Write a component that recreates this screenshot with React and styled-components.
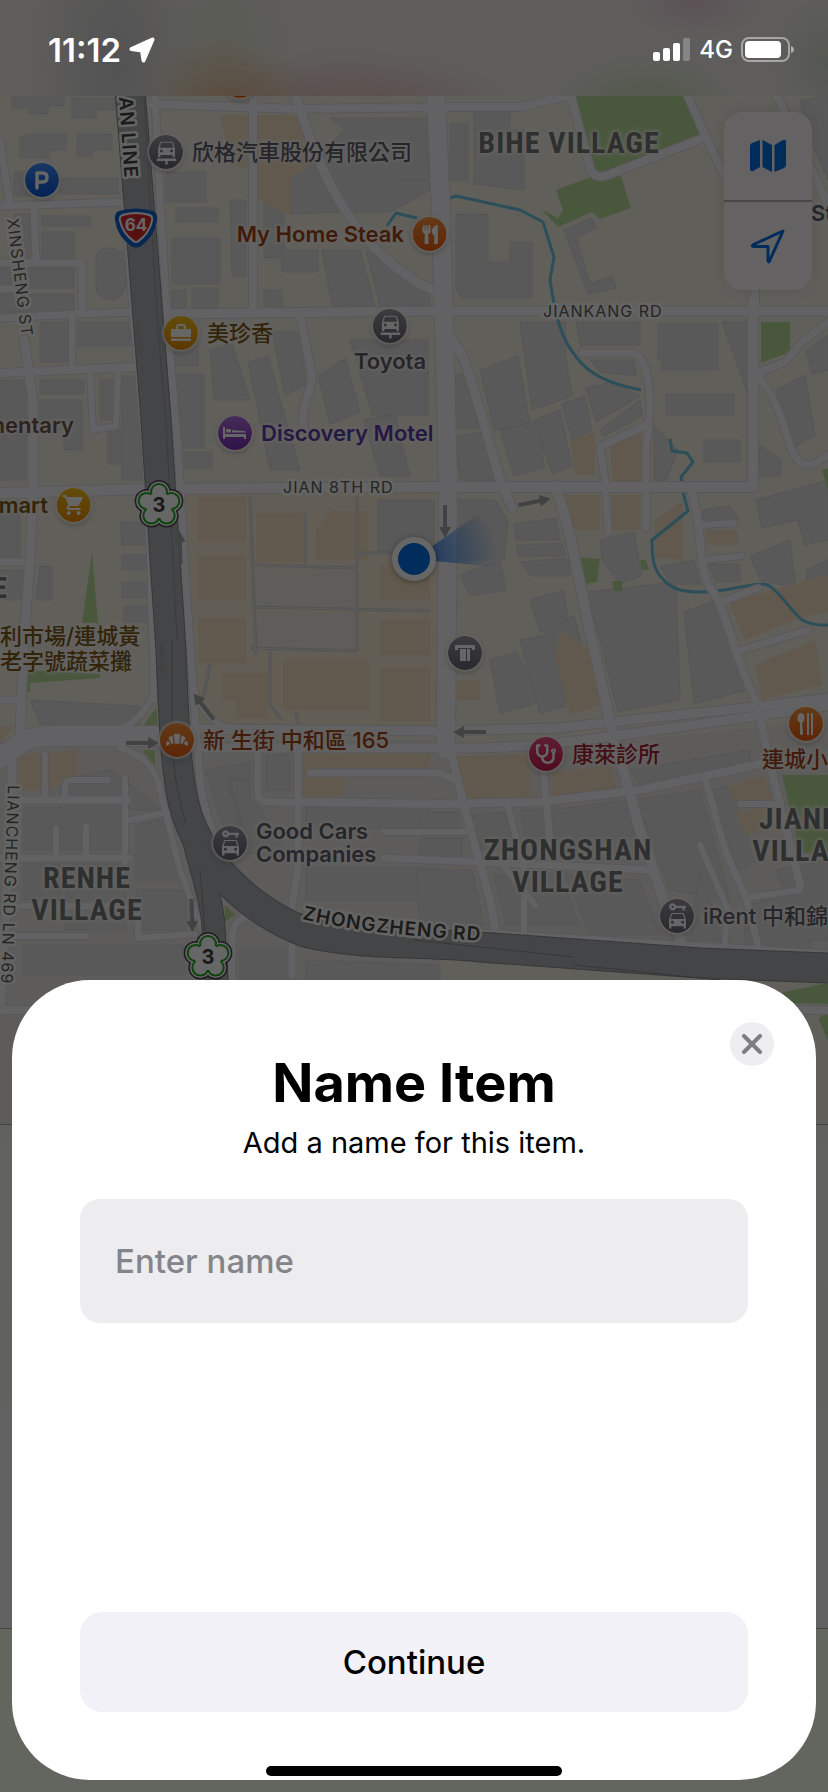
import React, { useState } from "react";
import styled, { createGlobalStyle, css } from "styled-components";
import { MdCarRepair, MdCarRental, MdBakeryDining, MdShoppingCart } from "react-icons/md";
import { FaUtensils, FaStethoscope } from "react-icons/fa";

const sans = `Inter, "Noto Sans CJK TC", sans-serif`;
const narrow = `"Liberation Sans Narrow", "Roboto Condensed", "DejaVu Sans Condensed", sans-serif`;

const MAP_W = 828;
const MAP_H = 1124;

const GlobalStyle = createGlobalStyle`
  *, *::before, *::after { box-sizing: border-box; }
  body { margin: 0; font-family: ${sans}; background: #666; }
  button, input { font-family: inherit; }
`;

const Screen = styled.div`
  position: relative;
  display: flex;
  flex-direction: column;
  justify-content: space-between;
  min-height: 100vh;
  overflow: hidden;
`;

/* ---------- Backdrop: map and the drawer under it ---------- */

const Backdrop = styled.div`
  position: absolute;
  inset: 0;
  display: flex;
  flex-direction: column;
`;

const MapCanvas = styled.div`
  position: relative;
  flex: none;
  width: 100%;
  aspect-ratio: ${MAP_W} / ${MAP_H};
  overflow: hidden;
`;

const Terrain = styled.svg`
  display: block;
  width: 100%;
  height: 100%;
`;

const DrawerBody = styled.div`
  flex: none;
  height: 504px;
  border-top: 1px solid #a8a8a4;
  background: linear-gradient(#f6f4e9, #f3f5f0 40%, #f4f4f6);
`;

const DrawerFooter = styled.div`
  flex: 1;
  border-top: 1px solid #a8a8a4;
  background: #f8ffec;
`;

const FrostedStrip = styled.div`
  position: absolute;
  inset: 0 0 auto 0;
  height: 96px;
  background:
    radial-gradient(ellipse 80px 70px at 27% 110%, rgba(226, 170, 110, 0.6), transparent),
    radial-gradient(ellipse 170px 60px at 42% 115%, rgba(220, 160, 145, 0.6), transparent),
    radial-gradient(ellipse 90px 110px at 27% 40%, rgba(222, 226, 200, 0.6), transparent),
    radial-gradient(ellipse 90px 180px at 14% 70%, rgba(196, 196, 198, 0.7), transparent),
    radial-gradient(ellipse 100px 60px at 78% 115%, rgba(190, 215, 160, 0.7), transparent),
    radial-gradient(ellipse 70px 40px at 84% 0%, rgba(215, 160, 190, 0.4), transparent),
    radial-gradient(ellipse 60px 70px at 100% 66%, rgba(196, 206, 184, 0.6), transparent),
    #ece9e6;
`;

const MapControls = styled.div`
  position: absolute;
  top: 112px;
  right: 16px;
  width: 88px;
  border-radius: 18px;
  overflow: hidden;
  background: #fcf6f7;
  box-shadow: 0 0 16px rgba(0, 0, 0, 0.12);
`;

const ControlButton = styled.button`
  display: flex;
  align-items: center;
  justify-content: center;
  width: 100%;
  height: 88px;
  padding: 0;
  border: 0;
  background: none;
  color: #006ee6;

  & + & {
    height: 90px;
    border-top: 2px solid #b4b0b2;
  }
`;

const Scrim = styled.div`
  position: absolute;
  inset: 0;
  background: rgba(0, 0, 0, 0.6);
`;

/* ---------- Map annotations ---------- */

const halo = css`
  text-shadow:
    0 0 3px #f8f6f0, 0 0 3px #f8f6f0, 0 0 4px #f8f6f0, 0 0 6px #f8f6f0;
`;

const pinShift = {
  right: "translate(-18px, -50%)",
  left: "translate(calc(-100% + 18px), -50%)",
  below: "translate(-50%, -18px)",
};

const Pin = styled.div`
  position: absolute;
  left: ${(p) => (p.$x / MAP_W) * 100}%;
  top: ${(p) => (p.$y / MAP_H) * 100}%;
  display: flex;
  flex-direction: ${(p) => ({ right: "row", left: "row-reverse", below: "column" })[p.$side]};
  align-items: center;
  gap: ${(p) => (p.$side === "below" ? 6 : 8)}px;
  transform: ${(p) => pinShift[p.$side]};
`;

const pinTones = {
  gray: "linear-gradient(#9494a0, #646472)",
  orange: "linear-gradient(#f8923a, #e85c10)",
  yellow: "linear-gradient(#f8c014, #e88a00)",
  blue: "linear-gradient(#3c8cf8, #0a54d0)",
  purple: "linear-gradient(#b070e0, #762cb0)",
  pink: "linear-gradient(#ec4c84, #c81c4c)",
};

const PinDisc = styled.span`
  display: flex;
  flex: none;
  align-items: center;
  justify-content: center;
  width: 36px;
  height: 36px;
  border: 1px solid rgba(251, 249, 244, 0.8);
  border-radius: 50%;
  background: ${(p) => pinTones[p.$tone]};
  background-clip: padding-box;
  box-shadow: 0 0 2px 1px rgba(251, 249, 244, 0.8), 0 2px 5px rgba(0, 0, 0, 0.25);
  color: #fff;
`;

const labelTones = {
  gray: "#5e5e6c",
  orange: "#a2441a",
  yellow: "#7c5a14",
  purple: "#5c3ca6",
  pink: "#a82238",
  brown: "#74544e",
};

const PinLabel = styled.span`
  color: ${(p) => labelTones[p.$tone]};
  font-size: 22px;
  font-weight: ${(p) => (p.$cjk ? 500 : 600)};
  line-height: 23px;
  white-space: pre;
  ${halo}
`;

const FreeLabel = styled.div`
  position: absolute;
  left: ${(p) => (p.$x / MAP_W) * 100}%;
  top: ${(p) => (p.$y / MAP_H) * 100}%;
  transform: translate(${(p) => ({ start: "0", end: "-100%", middle: "-50%" })[p.$anchor]}, -50%);
  color: ${(p) => labelTones[p.$tone]};
  font-size: 22px;
  font-weight: ${(p) => (p.$cjk ? 500 : 600)};
  line-height: 25px;
  white-space: pre;
  ${halo}
`;

const VillageLabel = styled(FreeLabel)`
  color: #747677;
  font-family: ${narrow};
  font-size: 30px;
  font-weight: 700;
  line-height: 32px;
  letter-spacing: 1px;
  text-align: center;
`;

const Shield = styled.svg`
  position: absolute;
  left: ${(p) => (p.$x / MAP_W) * 100}%;
  top: ${(p) => (p.$y / MAP_H) * 100}%;
  transform: translate(-50%, -50%);
  overflow: visible;
`;

const UserDot = styled.div`
  position: absolute;
  left: ${(414 / MAP_W) * 100}%;
  top: ${(559 / MAP_H) * 100}%;
  width: 44px;
  height: 44px;
  border: 6px solid #fff;
  border-radius: 50%;
  background: #0070e6;
  box-shadow: 0 1px 6px rgba(0, 0, 0, 0.35);
  transform: translate(-50%, -50%);
`;

const StreetName = styled.text`
  fill: ${(p) => (p.$strong ? "#444446" : "#5c5c60")};
  stroke: #fbfaf6;
  stroke-width: 5px;
  stroke-linejoin: round;
  paint-order: stroke;
  font-family: ${sans};
  font-size: ${(p) => (p.$strong ? 19 : 16)}px;
  font-weight: ${(p) => (p.$strong ? 600 : 400)};
  letter-spacing: 1px;
`;

/* ---------- Status bar ---------- */

const StatusBar = styled.header`
  position: relative;
  display: flex;
  align-items: center;
  justify-content: space-between;
  height: 96px;
  padding: 4px 33px 0 48px;
  color: #fff;
`;

const StatusGroup = styled.div`
  display: flex;
  align-items: center;
  gap: 8px;
`;

const Clock = styled.span`
  font-size: 33px;
  font-weight: 600;
  line-height: 36px;
`;

const Network = styled.span`
  font-size: 24px;
  font-weight: 500;
  line-height: 28px;
`;

/* ---------- Sheet ---------- */

const Sheet = styled.section`
  position: relative;
  display: flex;
  flex-direction: column;
  min-height: 800px;
  margin: 12px;
  padding: 70px 68px 4px;
  border-radius: 78px;
  background: #fff;
  color: #000;
`;

const CloseButton = styled.button`
  position: absolute;
  top: 42px;
  right: 42px;
  display: flex;
  align-items: center;
  justify-content: center;
  width: 44px;
  height: 44px;
  padding: 0;
  border: 0;
  border-radius: 50%;
  background: #eeeef0;
  color: #7e7e84;
`;

const Title = styled.h1`
  margin: 0;
  font-size: 54px;
  font-weight: 700;
  line-height: 66px;
  text-align: center;
`;

const Subtitle = styled.p`
  margin: 8px 0 37px;
  font-size: 29px;
  font-weight: 400;
  line-height: 38px;
  text-align: center;
`;

const NameField = styled.input`
  width: 100%;
  height: 124px;
  padding: 0 35px;
  border: 0;
  border-radius: 20px;
  outline: 0;
  background: #ededef;
  color: #000;
  font-size: 33px;
  font-weight: 500;

  &::placeholder {
    color: #858589;
    opacity: 1;
  }
`;

const ContinueButton = styled.button`
  height: 100px;
  margin-top: auto;
  border: 0;
  border-radius: 22px;
  background: #f2f1f7;
  color: #000;
  font-size: 33px;
  font-weight: 500;
`;

const HomeIndicator = styled.div`
  width: 296px;
  height: 10px;
  margin: 54px auto 0;
  border-radius: 5px;
  background: #000;
`;

/* ---------- Map data ---------- */

const greens = [
  "M576 96H685L703 137L597 174L583 130Z",
  "M556 190L588 178L621 176L631 208L600 219L592 212L558 227L541 209L558 218L563 210Z",
  "M761 322H790V352L761 363Z",
  "M579 557L600 559L597 582L585 584Z",
  "M612 581H622V591H614Z",
  "M640 560H646L649 570H642Z",
  "M92 552L98 623H82Z",
  "M26 670L100 674V678L30 683V692H26Z",
  "M156 708L158 726H143Z",
  "M155 766V750L142 750Z",
  "M225 905L235 915L225 922Z",
  "M782 775H828V856L800 852Z",
  "M770 995L828 983V1004L790 1003Z",
  "M818 1018L828 1012V1040Z",
  "M822 470L828 468V490Z",
];

const orangeBlocks = [
  "M220 115H298L312 140L305 170L290 178V215L258 200V170L230 165Z",
  "M198 497H246V541H198Z",
  "M198 556H246V600H198Z",
  "M198 618H246V663H198Z",
  "M256 513H302V562H256Z",
  "M332 511H368V560H316V530Z",
  "M380 565H430V600H380Z",
  "M380 620H430V655H380Z",
  "M380 668H430V721H380Z",
  "M222 673H268V718H236V700H222Z",
  "M283 661H370V710H283Z",
  "M562 495H600V530H575L562 510Z",
  "M612 495H640V530H612Z",
  "M655 520L683 500V560L655 558Z",
  "M610 445L642 430V482H612Z",
  "M570 440L595 432V475H575Z",
  "M706 530H738V545H706Z",
  "M728 602L828 575V612L800 618L745 640Z",
  "M560 630L590 650L600 705L570 716L556 660Z",
  "M456 680H480V700H456Z",
  "M456 756L530 754V798L466 800Z",
  "M552 772L610 765L618 790L552 796Z",
  "M300 750H430V778H300Z",
  "M755 665L815 640L822 685L762 700Z",
  "M728 785L766 775L772 800L735 805Z",
  "M735 812L768 806L774 830L745 834Z",
  "M16 755L78 750V775L50 790H18Z",
  "M0 725L14 728L0 742Z",
  "M300 775H345V796H300Z",
];

const buildings = [
  "M12 96H64V106H48V114H28V108H12Z",
  "M72 98H116V110H96V118H72Z",
  "M28 134H66V150H50V158H20V138Z",
  "M78 134H112V150H92V156H76Z",
  "M14 172H50V196H14Z",
  "M60 178H118V194H60Z",
  "M14 214H30V258H14Z",
  "M42 216H90V226H42Z",
  "M42 232H74V258H42Z",
  "M96 258Q96 248 110 248Q126 250 126 262V286Q122 300 110 300Q96 298 96 286Z",
  "M0 268H74V288H0Z",
  "M0 294H74V312H0Z",
  "M40 322H68V362H40Z",
  "M78 322H130V346H78Z",
  "M0 380H26V480H0Z",
  "M40 380H84V394H40Z",
  "M40 400H62V430H40Z",
  "M64 400H82V450H64Z",
  "M100 380H112V420H100Z",
  "M108 430H122V464H108Z",
  "M122 376H142V480H122Z",
  "M0 500H20V556H0Z",
  "M40 566H52V600H36Z",
  "M120 522H146V545H122Z",
  "M122 555H148V570H122Z",
  "M122 582H148V598H122Z",
  "M124 606H150V622H124Z",
  "M0 570H24V600H0Z",
  "M30 700L140 706V724H40Z",
  "M166 172H206V202H166Z",
  "M176 208H218V222H176Z",
  "M172 238H220V284H172Z",
  "M192 288H218V308H192Z",
  "M172 290H186V308H172Z",
  "M230 200H246V276H232Z",
  "M290 214V178L345 130L330 118H430V190L390 212H340Z",
  "M264 200L284 214V258H264Z",
  "M264 290H282V310H264Z",
  "M282 250H318V272H282Z",
  "M322 250L360 250L375 306H332Z",
  "M366 250L430 296V306H380Z",
  "M400 150H428V180H400Z",
  "M172 340H198V366H172Z",
  "M174 374H204V448H176Z",
  "M184 452H212V468H184Z",
  "M210 350L232 344L250 400H214Z",
  "M248 362L268 356L300 470H270Z",
  "M272 332H300L306 385L285 395Z",
  "M318 376L345 358L360 412L330 424Z",
  "M350 340H428V415H372Z",
  "M364 420L395 414L410 476H380Z",
  "M378 500H434V552H378Z",
  "M450 124H468V180H450Z",
  "M472 112H510V130H524V190L474 184V112Z",
  "M456 214H488V262H510V242H532V298H462L456 290Z",
  "M564 230L592 218L596 228L576 238L590 284L612 276L616 288L588 294Z",
  "M520 322H566V360L572 396L532 410Z",
  "M576 322H640V345H582V352Z",
  "M590 360H634L636 376L600 372Z",
  "M658 324H718V370H662V360H658Z",
  "M722 322H750V400Z",
  "M666 394H734V415H666Z",
  "M704 440H740V462H704Z",
  "M454 375L472 372L478 428H456Z",
  "M480 370L518 356L530 424L494 430Z",
  "M456 436L484 432L496 480H460Z",
  "M500 430L540 420L544 468L514 476Z",
  "M534 420L560 410L572 466L552 474Z",
  "M562 404L585 396L592 430L572 440Z",
  "M586 388L612 382L640 396L596 422Z",
  "M600 430L640 400L642 416L604 436Z",
  "M654 425L678 450L666 480H654Z",
  "M456 500H495L508 520L504 560H456Z",
  "M514 524L556 518L560 540H516Z",
  "M516 545L562 543L566 556H518Z",
  "M520 562L570 558V576H530Z",
  "M460 575L500 560L506 590L470 596Z",
  "M600 540L634 532L642 576L620 584L602 560Z",
  "M586 592L676 582L680 700L618 712L600 640Z",
  "M684 612L716 600L746 690L694 704Z",
  "M530 600L564 590L568 624L540 632Z",
  "M545 630L574 616L582 645L548 652Z",
  "M490 660L516 652L546 700L500 714Z",
  "M520 640L552 634L566 706L540 714Z",
  "M660 566L694 560L700 584L672 584Z",
  "M702 510L730 506L740 520H704Z",
  "M708 564H740V582H716Z",
  "M750 556L790 540L796 588L760 580Z",
  "M756 500L828 480V540L805 545L798 520L762 528Z",
  "M806 570L828 560V600H808Z",
  "M760 445L782 460L780 476H758Z",
  "M776 390L805 375L815 435L790 450Z",
  "M806 350L828 335V370L812 374Z",
  "M800 100L828 96V180L806 130Z",
  "M24 808H120V850H24Z",
  "M60 780L110 770L150 800L160 810H60Z",
  "M136 825L168 818L186 880L136 880Z",
  "M24 864H60V900H24Z",
  "M66 864H125V930H66Z",
  "M136 890H186V930H140Z",
  "M24 945H184V975H24Z",
  "M206 770L250 762V800L262 810L290 860L230 850Z",
  "M266 755H290V790H266Z",
  "M306 806H430V828H306Z",
  "M306 868H440V900H306Z",
  "M240 950H292V990H240Z",
  "M306 960L440 965V990H306Z",
  "M470 815L505 812L518 850H482Z",
  "M420 812H458V828H420Z",
  "M420 838H462V858H420Z",
  "M416 870H472L484 925H420Z",
  "M552 810L626 800L640 862L556 858Z",
  "M520 810H544V860H530Z",
  "M494 875H560L580 925H506Z",
  "M565 875L640 880L660 935H590Z",
  "M636 800L700 790L730 900L670 890Z",
  "M700 870L722 940H690Z",
  "M630 770L750 750V762L640 785Z",
  "M710 790L728 786L758 860L738 870Z",
  "M745 905L795 895L812 950H745Z",
  "M776 870L828 860V940H806Z",
];

const lanes = [
  { w: 8, d: "M150 104L300 109L437 107H520L572 95" },
  { w: 8, d: "M253 96V312" },
  { w: 9, d: "M294 92L310 138C330 190 350 225 385 258C405 275 420 286 440 292" },
  { w: 9, d: "M168 314L437 311H828" },
  { w: 10, d: "M0 493L150 489L437 487H753V300" },
  { w: 7, d: "M0 206L124 202" },
  { w: 7, d: "M0 140L10 206" },
  { w: 7, d: "M34 206L36 262" },
  { w: 7, d: "M0 263H82V310" },
  { w: 7, d: "M0 318L78 314L130 312" },
  { w: 7, d: "M0 289H20" },
  { w: 8, d: "M0 373L136 367" },
  { w: 6, d: "M72 316V368" },
  { w: 6, d: "M90 370L93 430L116 426L118 370" },
  { w: 9, d: "M24 340L33 400V490L30 560L24 640L20 735" },
  { w: 7, d: "M0 562H28" },
  { w: 7, d: "M0 700H22" },
  { w: 8, d: "M300 314L312 375C312 395 300 400 304 430" },
  { w: 9, d: "M442 330C465 345 470 380 480 410L500 480L512 508" },
  { w: 10, d: "M555 486C572 530 580 590 592 640L612 730L640 830L665 905L685 950" },
  { w: 7, d: "M582 353H632C645 355 650 380 650 410L646 450V528" },
  { w: 7, d: "M648 424L600 447L605 480L608 532" },
  { w: 8, d: "M690 487C705 530 696 570 712 590C728 615 732 650 757 705L775 785L800 885" },
  { w: 6, d: "M702 525L734 523" },
  { w: 6, d: "M702 560L742 556" },
  { w: 7, d: "M722 602L758 588" },
  { w: 7, d: "M742 650L808 630" },
  { w: 7, d: "M757 373L785 362L802 342L828 322" },
  { w: 7, d: "M757 375C785 405 785 450 800 462C810 470 820 460 828 455" },
  { w: 8, d: "M570 92L590 168Q594 180 608 175L706 137" },
  { w: 8, d: "M686 92L706 137L755 240V310" },
  { w: 8, d: "M775 92L800 145L828 205" },
  { w: 8, d: "M300 802L440 804L540 802L640 790L760 764" },
  { w: 8, d: "M449 745L465 810L490 900L498 945" },
  { w: 7, d: "M310 773H440L456 780" },
  { w: 7, d: "M543 768L550 840" },
  { w: 6, d: "M384 832H470" },
  { w: 7, d: "M384 858L480 862L650 870" },
  { w: 6, d: "M508 806L524 870L524 940" },
  { w: 6, d: "M505 868L535 905" },
  { w: 7, d: "M706 782L725 850L746 898L758 945" },
  { w: 6, d: "M745 898L800 890" },
  { w: 6, d: "M700 845L728 910L724 950" },
  { w: 6, d: "M740 804H780" },
  { w: 7, d: "M258 752V795Q260 802 272 802L305 803" },
  { w: 7, d: "M298 750V870L292 905V975" },
  { w: 7, d: "M14 800H128" },
  { w: 7, d: "M0 858H130" },
  { w: 6, d: "M125 778V862" },
  { w: 6, d: "M130 820L168 812" },
  { w: 6, d: "M45 755V800" },
  { w: 6, d: "M65 798V785Q65 780 76 780H108" },
  { w: 6, d: "M56 828V856" },
  { w: 6, d: "M86 826V856" },
  { w: 6, d: "M20 906H130" },
  { w: 6, d: "M0 936H86" },
  { w: 6, d: "M138 900V938L195 934" },
  { w: 7, d: "M232 990V935Q234 920 250 915" },
  { w: 9, d: "M12 760V800L0 1010" },
  { w: 8, d: "M0 1010H828" },
];

const arterials = [
  { w: 18, d: "M436 96L441 210L448 480L446 750" },
  { w: 20, d: "M0 758L24 741Q34 736 50 736H160" },
  { w: 9, d: "M190 729L440 731L560 728C640 718 720 712 828 698" },
  { w: 9, d: "M190 748H480C560 746 620 735 828 706" },
  { w: 7, d: "M155 96L160 200L168 330L178 450L187 600L194 700L200 780C210 860 250 895 300 920" },
  { w: 6, d: "M124 200L134 330L145 450L150 560L154 700" },
  { w: 6, d: "M158 680Q150 715 120 730" },
  { w: 6, d: "M194 690Q205 722 230 728" },
  { w: 6, d: "M120 748Q155 758 160 790L180 870L202 930" },
  { w: 7, d: "M300 925L500 934L828 954" },
];

const paths = [
  "M250 497L256 655",
  "M250 565L357 568M250 607L430 611M250 648L357 651M357 497V651",
  "M305 513V564M357 553H414",
  "M210 664L203 700M270 650V705L282 720M296 712L299 728",
  "M228 780L260 778M228 780L242 825",
];

const arrows = [
  { x: 445, y: 521, r: 90 },
  { x: 534, y: 502, r: -12 },
  { x: 142, y: 743, r: 0 },
  { x: 470, y: 732, r: 180 },
  { x: 204, y: 707, r: -128 },
  { x: 192, y: 915, r: 88 },
  { x: 180, y: 548, r: -92 },
  { x: 139, y: 338, r: 85 },
  { x: 162, y: 660, r: 87 },
];

const BagGlyph = () => (
  <svg width="24" height="20" viewBox="0 0 24 20" aria-hidden="true">
    <path d="M8 6V4Q8 2 10 2H14Q16 2 16 4V6" fill="none" stroke="currentColor" strokeWidth="2" />
    <path d="M2 6H22V14H2ZM2 15.500H22V18H2Z" fill="currentColor" />
  </svg>
);

const BedGlyph = () => (
  <svg width="26" height="16" viewBox="0 0 26 16" aria-hidden="true">
    <path d="M1 2H3V9H24V14H22V12H3V14H1Z" fill="currentColor" />
    <path d="M4 4H8Q9 4 9 5V7.500H4ZM10 5L22 6Q24 6 24 7.500H10Z" fill="currentColor" />
  </svg>
);

const AtmGlyph = () => (
  <svg width="22" height="20" viewBox="0 0 22 20" aria-hidden="true">
    <path d="M1 2H21V7H18V5H4V7H1Z" fill="currentColor" />
    <path d="M6 6H12V18H6ZM13 6H16V18H13Z" fill="currentColor" />
  </svg>
);

const ChopsticksGlyph = () => (
  <svg width="18" height="24" viewBox="0 0 18 24" aria-hidden="true">
    <ellipse cx="4" cy="6" rx="3.500" ry="5" fill="currentColor" />
    <path d="M3 9H5L6 22Q4 24 3 22ZM10 1H12V23H10ZM14 1H16V23H14Z" fill="currentColor" />
  </svg>
);

const ParkingGlyph = () => (
  <svg width="18" height="20" viewBox="0 0 18 20" aria-hidden="true">
    <path d="M4 18V3H9.500Q14 3 14 7.500T9.500 12H4" fill="none" stroke="currentColor" strokeWidth="3.500" strokeLinejoin="round" strokeLinecap="round" />
  </svg>
);

const pins = [
  { x: 240, y: 81, side: "right", tone: "orange" },
  { x: 166, y: 152, side: "right", tone: "gray", icon: <MdCarRepair size={29} />, text: "欣格汽車股份有限公司", cjk: true },
  { x: 42, y: 180, side: "right", tone: "blue", icon: <ParkingGlyph /> },
  { x: 430, y: 234, side: "left", tone: "orange", icon: <FaUtensils size={19} />, text: "My Home Steak" },
  { x: 181, y: 333, side: "right", tone: "yellow", icon: <BagGlyph />, text: "美珍香", cjk: true },
  { x: 390, y: 326, side: "below", tone: "gray", icon: <MdCarRepair size={29} />, text: "Toyota" },
  { x: 235, y: 433, side: "right", tone: "purple", icon: <BedGlyph />, text: "Discovery Motel" },
  { x: 74, y: 505, side: "left", tone: "yellow", icon: <MdShoppingCart size={24} />, text: "mart" },
  { x: 465, y: 653, side: "right", tone: "gray", icon: <AtmGlyph /> },
  { x: 177, y: 740, side: "right", tone: "orange", icon: <MdBakeryDining size={30} />, text: "新 生街 中和區 165", cjk: true },
  { x: 546, y: 754, side: "right", tone: "pink", icon: <FaStethoscope size={20} />, text: "康萊診所", cjk: true },
  { x: 806, y: 724, side: "below", tone: "orange", icon: <ChopsticksGlyph />, text: "連城小館", cjk: true },
  { x: 230, y: 843, side: "right", tone: "gray", icon: <MdCarRental size={29} />, text: "Good Cars\nCompanies" },
  { x: 677, y: 916, side: "right", tone: "gray", icon: <MdCarRental size={29} />, text: "iRent 中和錦", cjk: true },
];

const petals = [0, 1, 2, 3, 4].map((i) => {
  const a = ((-90 + i * 72) * Math.PI) / 180;
  return { cx: 13 * Math.cos(a), cy: 13 * Math.sin(a) };
});

const Blossom = ({ r, fill }) => (
  <g fill={fill}>
    <circle r="13" />
    {petals.map((p, i) => (
      <circle key={i} cx={p.cx} cy={p.cy} r={r} />
    ))}
  </g>
);

const FreewayShield = ({ x, y }) => (
  <Shield $x={x} $y={y} width="52" height="52" viewBox="-26 -26 52 52">
    <Blossom r={12} fill="#4a4a50" />
    <Blossom r={10.500} fill="#ffffff" />
    <Blossom r={9} fill="#22a822" />
    <Blossom r={7} fill="#ffffff" />
    <text y="7" textAnchor="middle" fontFamily={sans} fontSize="20" fontWeight="700" fill="#3c3c3c">3</text>
  </Shield>
);

const ExpresswayShield = ({ x, y }) => (
  <Shield $x={x} $y={y} width="44" height="40" viewBox="0 0 44 40">
    <path d="M5 3Q22 -2 39 3Q44 5 43 12Q41 28 27 38Q22 41 17 38Q3 28 1 12Q0 5 5 3Z" fill="#1460cc" />
    <path d="M8 6Q22 2 36 6Q40 8 39 13Q36 26 25 34Q22 36 19 34Q8 26 5 13Q4 8 8 6Z" fill="#fff" />
    <path d="M9 8Q22 4 35 8Q38 9 37 13Q34 25 24 32Q22 34 20 32Q10 25 7 13Q6 9 9 8Z" fill="#d6282c" />
    <text x="22" y="23" textAnchor="middle" fontFamily={sans} fontSize="17" fontWeight="700" fill="#fff">64</text>
  </Shield>
);

function CityMap() {
  return (
    <MapCanvas>
      <Terrain viewBox={`0 0 ${MAP_W} ${MAP_H}`} aria-hidden="true">
        <defs>
          <radialGradient id="beam" gradientUnits="userSpaceOnUse" cx="414" cy="559" r="84">
            <stop offset="0.2" stopColor="#2a7ce8" stopOpacity="0.8" />
            <stop offset="1" stopColor="#2a7ce8" stopOpacity="0" />
          </radialGradient>
          <path id="zhongzheng" d="M302 919C350 930 400 936 500 942" />
        </defs>
        <rect width={MAP_W} height={MAP_H} fill="#f2eee2" />
        <path d="M0 740H440V1124H0ZM440 760L828 720V960H440Z" fill="#e8e6e2" />
        <path d="M186 490H436V728H200Z" fill="#f4ead4" />
        <g fill="#dedede" stroke="#d4d4d4" strokeWidth="1">{buildings.map((d) => <path key={d} d={d} />)}</g>
        <g fill="#f3dfc0">{orangeBlocks.map((d) => <path key={d} d={d} />)}</g>
        <g fill="#b6dc98">{greens.map((d) => <path key={d} d={d} />)}</g>
        <path d="M256 568L355 570V607L256 606Z M256 611L355 613V648L256 647Z" fill="#eae8e0" />
        <g fill="none" stroke="#6cc4e0" strokeWidth="3" strokeLinejoin="round">
          <path d="M387 226L396 213L417 218" />
          <path d="M450 198L456 196L520 210L543 222L554 257L550 280C556 320 562 340 577 358C590 375 610 384 641 390" />
          <path d="M670 439L672 451L687 453L693 462L681 477L683 492L688 511L652 540C652 560 654 570 662 578C670 588 680 592 700 592C730 592 745 584 764 584C776 586 790 610 802 620Q814 626 828 625" />
        </g>
        <g fill="none" stroke="#ceced2" strokeWidth="3">{paths.map((d) => <path key={d} d={d} />)}</g>
        <g fill="none" stroke="#e8e8ea" strokeWidth="1">{paths.map((d) => <path key={d} d={d} />)}</g>
        <g fill="none" stroke="#dadade" strokeLinecap="round" strokeLinejoin="round">
          {lanes.concat(arterials).map(({ d, w }) => <path key={d} d={d} strokeWidth={w + 2} />)}
        </g>
        <g fill="none" stroke="#f6f6f9" strokeLinecap="round" strokeLinejoin="round">
          {lanes.concat(arterials).map(({ d, w }) => <path key={d} d={d} strokeWidth={w} />)}
        </g>
        <g fill="none" strokeLinejoin="round">
          <g stroke="#88898d">
            <path d="M188 810C196 860 208 880 213 920L217 990" strokeWidth="24" />
            <path d="M130 90L149 330L156 420L165 560L171 650C174 730 176 770 184 805C200 865 250 910 305 932C360 946 420 941 480 947L700 963L828 968" strokeWidth="31" />
          </g>
          <g stroke="#a9acb0">
            <path d="M188 810C196 860 208 880 213 920L217 990" strokeWidth="22" />
            <path d="M130 90L149 330L156 420L165 560L171 650C174 730 176 770 184 805C200 865 250 910 305 932C360 946 420 941 480 947L700 963L828 968" strokeWidth="29" />
          </g>
          <path d="M144 96L158 330L166 420L173 560L177 640" stroke="#949699" strokeWidth="1" />
          <path d="M172 640V740C174 770 176 790 186 824M200 870L209 985M414 940L574 957M574 965L720 980" stroke="#88898d" strokeWidth="1" />
        </g>
        <g fill="#a6a6a8">
          {arrows.map(({ x, y, r }) => (
            <path key={`${x}-${y}`} transform={`translate(${x} ${y}) rotate(${r})`} d="M-16 -2H6V-6L17 0L6 6V2H-16Z" />
          ))}
        </g>
        <path d="M414 559L478 514Q500 535 496 567Z" fill="url(#beam)" />
        <StreetName x="543" y="317">JIANKANG RD</StreetName>
        <StreetName x="283" y="493">JIAN 8TH RD</StreetName>
        <StreetName transform="translate(7 219) rotate(83)">XINSHENG ST</StreetName>
        <StreetName transform="translate(8 785) rotate(92)">LIANCHENG RD LN 469</StreetName>
        <StreetName $strong transform="translate(119 97) rotate(86)">AN LINE</StreetName>
        <StreetName $strong><textPath href="#zhongzheng">ZHONGZHENG RD</textPath></StreetName>
      </Terrain>

      <VillageLabel $x={569} $y={143} $anchor="middle">BIHE VILLAGE</VillageLabel>
      <VillageLabel $x={87} $y={894} $anchor="middle">{"RENHE\nVILLAGE"}</VillageLabel>
      <VillageLabel $x={568} $y={866} $anchor="middle">{"ZHONGSHAN\nVILLAGE"}</VillageLabel>
      <VillageLabel $x={808} $y={835} $anchor="middle">{"JIANHE\nVILLAGE"}</VillageLabel>
      <VillageLabel $x={8} $y={588} $anchor="end">E</VillageLabel>
      <FreeLabel $x={74} $y={425} $anchor="end" $tone="brown">Elementary</FreeLabel>
      <FreeLabel $x={0} $y={649} $anchor="start" $tone="yellow" $cjk>{"利市場/連城黃\n老字號蔬菜攤"}</FreeLabel>
      <FreeLabel $x={811} $y={213} $anchor="start" $tone="gray">St</FreeLabel>

      <FreewayShield x={159} y={505} />
      <FreewayShield x={208} y={957} />
      <ExpresswayShield x={136} y={228} />

      {pins.map(({ x, y, side, tone, icon, text, cjk }) => (
        <Pin key={`${x}-${y}`} $x={x} $y={y} $side={side}>
          <PinDisc $tone={tone}>{icon}</PinDisc>
          {text && <PinLabel $tone={tone} $cjk={cjk}>{text}</PinLabel>}
        </Pin>
      ))}
      <UserDot />
    </MapCanvas>
  );
}

const LocationArrow = () => (
  <svg width="26" height="26" viewBox="0 0 26 26" aria-hidden="true">
    <path d="M23.500 2.500L14.500 23.500L13 13.500L2.500 12Z" fill="#fff" stroke="#fff" strokeWidth="4" strokeLinejoin="round" />
  </svg>
);

const SignalBars = () => (
  <svg width="38" height="24" viewBox="0 0 38 24" fill="#fff" aria-hidden="true">
    <rect x="0" y="14" width="7" height="9" rx="2" />
    <rect x="10" y="10" width="7" height="13" rx="2" />
    <rect x="20" y="5" width="7" height="18" rx="2" />
    <rect x="30" y="0" width="7" height="23" rx="2" opacity="0.25" />
  </svg>
);

const Battery = () => (
  <svg width="54" height="26" viewBox="0 0 54 26" aria-hidden="true">
    <rect x="1" y="1" width="47" height="23" rx="7" fill="none" stroke="#fff" strokeOpacity="0.45" strokeWidth="2" />
    <rect x="4" y="4" width="36" height="17" rx="4" fill="#fff" />
    <path d="M50 9Q53 10 53 12.500T50 16Z" fill="#fff" fillOpacity="0.5" />
  </svg>
);

export default function App() {
  const [name, setName] = useState("");

  return (
    <>
      <GlobalStyle />
      <Screen>
        <Backdrop>
          <CityMap />
          <DrawerBody />
          <DrawerFooter />
          <FrostedStrip />
          <MapControls>
            <ControlButton type="button" aria-label="Map style">
              <svg width="36" height="34" viewBox="0 0 36 34" fill="currentColor" aria-hidden="true">
                <path d="M0 7Q0 5 2 4L10 1V28L3 32Q0 33 0 30Z" />
                <path d="M12.500 1L22 6V33L12.500 28Z" />
                <path d="M24.500 6L33 1Q36 0 36 3V26Q36 28 34 29L24.500 33Z" />
              </svg>
            </ControlButton>
            <ControlButton type="button" aria-label="Current location">
              <svg width="36" height="36" viewBox="0 0 36 36" fill="none" stroke="currentColor" strokeWidth="3" strokeLinejoin="round" aria-hidden="true">
                <path d="M33 3L19.500 33Q18.500 35 18 32.500V18.500H3.500Q1 18 3.500 16.500Z" />
              </svg>
            </ControlButton>
          </MapControls>
          <Scrim />
        </Backdrop>

        <StatusBar>
          <StatusGroup>
            <Clock>11:12</Clock>
            <LocationArrow />
          </StatusGroup>
          <StatusGroup>
            <SignalBars />
            <Network>4G</Network>
            <Battery />
          </StatusGroup>
        </StatusBar>

        <Sheet role="dialog" aria-labelledby="sheet-title">
          <CloseButton type="button" aria-label="Close">
            <svg width="20" height="20" viewBox="0 0 20 20" fill="none" stroke="currentColor" strokeWidth="4" strokeLinecap="round" aria-hidden="true">
              <path d="M2 2L18 18M18 2L2 18" />
            </svg>
          </CloseButton>
          <Title id="sheet-title">Name Item</Title>
          <Subtitle>Add a name for this item.</Subtitle>
          <NameField
            type="text"
            aria-label="Item name"
            placeholder="Enter name"
            value={name}
            onChange={(e) => setName(e.target.value)}
          />
          <ContinueButton type="button">Continue</ContinueButton>
          <HomeIndicator />
        </Sheet>
      </Screen>
    </>
  );
}
